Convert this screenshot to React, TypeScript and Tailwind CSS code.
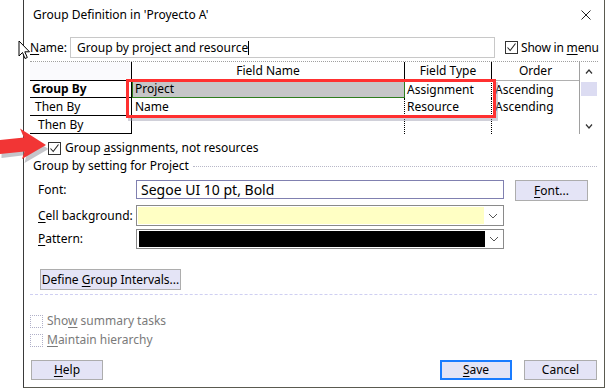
import React from "react";

const U = ({ children }: { children: React.ReactNode }) => <span className="underline underline-offset-2">{children}</span>;

function CheckBox({ checked, disabled }: { checked?: boolean; disabled?: boolean }) {
  return (
    <div
      className={
        "w-[13px] h-[13px] shrink-0 flex items-center justify-center bg-white " +
        (disabled ? "border border-dotted border-[#b0b0c8]" : "border border-[#333333]")
      }
    >
      {checked && (
        <svg width="11" height="11" viewBox="0 0 11 11">
          <polyline points="1.5,5.5 4.2,8.5 9.5,1.5" fill="none" stroke="#222" strokeWidth="1.1" />
        </svg>
      )}
    </div>
  );
}

function Btn({ children, w, primary }: { children: React.ReactNode; w: string; primary?: boolean }) {
  return (
    <div
      className={
        "h-full flex items-center justify-center bg-[#e4e4f6] text-black " +
        w +
        " " +
        (primary ? "border-2 border-[#1a7cff]" : "border border-[#adadad]")
      }
    >
      {children}
    </div>
  );
}

function Chevron() {
  return (
    <svg width="10" height="6" viewBox="0 0 10 6">
      <polyline points="1,1 5,5 9,1" fill="none" stroke="#555" strokeWidth="1" />
    </svg>
  );
}

export default function App() {
  return (
    <div
      className="w-[605px] h-[389px] bg-white relative overflow-hidden text-[12px] leading-[16px] text-black"
      style={{ fontFamily: '"Noto Sans", "Open Sans", sans-serif' }}
    >
      <div className="ml-[23px] w-[582px] h-[388px] border-l border-r border-b border-l-[#3a3a3a] border-r-[#5a5a50] border-b-[#5a5a50] flex flex-col">
        {/* title */}
        <div className="h-[30px] flex items-center justify-between pl-[9px] pr-[13px]">
          <span className="text-[12px]">Group Definition in 'Proyecto A'</span>
          <svg width="10" height="10" viewBox="0 0 10 10">
            <path d="M0.5 0.5 L9.5 9.5 M9.5 0.5 L0.5 9.5" stroke="#222" strokeWidth="1" />
          </svg>
        </div>

        <div className="px-[6px] flex flex-col">
          {/* name row */}
          <div className="mt-[7px] h-[21px] flex items-center whitespace-nowrap">
            <span className="w-[40px] shrink-0">
              <U>N</U>ame:
            </span>
            <div className="w-[425px] shrink-0 h-full border border-[#c8c8c8] flex items-center pl-[6px]">
              Group by project and resource
              <span className="w-px h-[14px] bg-black" />
            </div>
            <div className="ml-[10px] flex items-center gap-[3px] shrink-0">
              <CheckBox checked />
              <span className="tracking-[-0.2px]">
                Show in <U>m</U>enu
              </span>
            </div>
          </div>

          {/* table */}
          <div className="mt-[3px] h-[73px] flex relative border-t border-dotted border-[#a0a0a0]">
            <div className="flex flex-col">
              {/* header */}
              <div className="flex h-[19px]">
                <div className="w-[102px] border-r border-b border-black bg-[#fafafd]" />
                <div className="w-[273px] border-r border-black flex items-center justify-center">Field Name</div>
                <div className="w-[87px] border-r border-black flex items-center justify-center">Field Type</div>
                <div className="w-[87px] border-b border-[#b0b0b0] flex items-center justify-center">Order</div>
              </div>
              {/* rows */}
              <div className="flex h-[18px]">
                <div className="w-[102px] border-r border-b border-black flex items-center pl-[2px] font-bold">Group By</div>
                <div className="w-[273px] bg-[#c6c6c8] border-l border-b border-r border-[#2e7d1e] flex items-center pl-[2px]">Project</div>
                <div className="w-[87px] border-r border-dotted border-black flex items-center pl-[2px]">Assignment</div>
                <div className="w-[87px] flex items-center pl-[3px]">Ascending</div>
              </div>
              <div className="flex h-[18px]">
                <div className="w-[102px] border-r border-b border-black flex items-center pl-[5px]">Then By</div>
                <div className="w-[273px] border-r border-dotted border-black flex items-center pl-[3px]">Name</div>
                <div className="w-[87px] border-r border-dotted border-black flex items-center pl-[2px]">Resource</div>
                <div className="w-[87px] flex items-center pl-[3px]">Ascending</div>
              </div>
              <div className="flex h-[18px]">
                <div className="w-[102px] border-r border-b border-black flex items-center pl-[8px]">Then By</div>
                <div className="w-[273px] border-r border-dotted border-black" />
                <div className="w-[87px] border-r border-dotted border-black" />
                <div className="w-[87px]" />
              </div>
            </div>
            {/* scrollbar */}
            <div className="w-[21px] border-l border-[#a0a0a0] flex flex-col items-center">
              <div className="h-[19px] flex items-center">
                <svg width="8" height="5" viewBox="0 0 8 5">
                  <polyline points="1,4.5 4,1 7,4.5" fill="none" stroke="#333" strokeWidth="1.2" />
                </svg>
              </div>
              <div className="w-[16px] h-[14px] bg-[#dcdcf2] mt-[1px]" />
              <div className="flex-1" />
              <div className="h-[12px] flex items-center mb-[2px]">
                <svg width="8" height="5" viewBox="0 0 8 5">
                  <polyline points="1,0.5 4,4 7,0.5" fill="none" stroke="#333" strokeWidth="1.2" />
                </svg>
              </div>
            </div>
            {/* red highlight */}
            <div className="absolute left-[96px] top-[17px] w-[370px] h-[39px] border-[3px] border-[#ff3030] shadow-[2px_3px_0_rgba(150,150,170,0.45)]" />
          </div>

          {/* group assignments */}
          <div className="mt-[8px] h-[12px] flex items-center pl-[18px] gap-[4px]">
            <CheckBox checked />
            <span>
              Group <U>a</U>ssignments, not resources
            </span>
          </div>

          {/* section header */}
          <div className="mt-[5px] h-[14px] flex items-center">
            <span className="pl-[3px]">Group by setting for Project</span>
            <div className="flex-1 ml-[4px] mr-[1px] border-t border-dotted border-[#b8b8c8]" />
          </div>

          {/* font row */}
          <div className="mt-[7px] h-[21px] flex items-start">
            <span className="w-[106px] pl-[8px] h-[19px] flex items-center">Font:</span>
            <div className="w-[368px] h-[19px] border border-[#8080b0] flex items-center pl-[4px] text-[14px]">
              Segoe UI 10 pt, Bold
            </div>
            <div className="ml-[11px] h-[21px]">
              <Btn w="w-[73px]">
                <span>
                  <U>F</U>ont...
                </span>
              </Btn>
            </div>
          </div>

          {/* cell background */}
          <div className="mt-[4px] h-[21px] flex items-center">
            <span className="w-[106px] pl-[8px]">
              <U>C</U>ell background:
            </span>
            <div className="w-[368px] h-full border border-[#8a8a8a] flex items-center p-[1px]">
              <div className="w-[346px] h-full bg-[#ffffc4]" />
              <div className="flex-1 flex justify-center">
                <Chevron />
              </div>
            </div>
          </div>

          {/* pattern */}
          <div className="mt-[3px] h-[20px] flex items-center">
            <span className="w-[106px] pl-[8px]">
              <U>P</U>attern:
            </span>
            <div className="w-[368px] h-full border border-[#8a8a8a] flex items-center py-[1px] pl-[2px] pr-[1px]">
              <div className="w-[346px] h-full bg-black" />
              <div className="flex-1 flex justify-center">
                <Chevron />
              </div>
            </div>
          </div>

          {/* define group intervals */}
          <div className="mt-[20px] h-[21px] pl-[10px] flex">
            <Btn w="w-[141px]">
              <span>
                Define <U>G</U>roup Intervals...
              </span>
            </Btn>
          </div>

          {/* dashed separator */}
          <div className="mt-[4px] mr-[1px] border-t border-dashed border-[#cfcff2]" />

          {/* disabled checks */}
          <div className="mt-[20px] h-[12px] flex items-center gap-[4px] text-[#7a7a7a]">
            <CheckBox disabled />
            <span>
              Sho<U>w</U> summary tasks
            </span>
          </div>
          <div className="mt-[7px] h-[12px] flex items-center gap-[4px] text-[#7a7a7a]">
            <CheckBox disabled />
            <span>
              <U>M</U>aintain hierarchy
            </span>
          </div>

          {/* bottom buttons */}
          <div className="mt-[14px] h-[20px] flex items-stretch">
            <div className="ml-[1px]">
              <Btn w="w-[72px]">
                <span>
                  <U>H</U>elp
                </span>
              </Btn>
            </div>
            <div className="flex-1" />
            <Btn w="w-[72px]" primary>
              <span>
                <U>S</U>ave
              </span>
            </Btn>
            <div className="ml-[12px] mr-[1px]">
              <Btn w="w-[73px]">Cancel</Btn>
            </div>
          </div>
        </div>
      </div>

      {/* mouse cursor */}
      <svg className="absolute left-[18px] top-[40px]" width="14" height="22" viewBox="0 0 14 22">
        <path d="M1 1 L1 16 L4.5 12.5 L7 18.5 L9.3 17.5 L6.8 11.8 L11.5 11.8 Z" fill="white" stroke="black" strokeWidth="1" strokeLinejoin="round" />
      </svg>

      {/* red arrow */}
      <svg className="absolute left-0 top-[126px]" width="50" height="38" viewBox="0 0 50 38">
        <path d="M0 16 L24 13 L20 4 L47 21 L23 35 L25 27 L0 30 Z" fill="rgba(140,140,150,0.5)" transform="translate(1.5,2)" />
        <path d="M0 14 L24 11.5 L20 2.5 L46 19 L22 33 L24.5 25.5 L0 28 Z" fill="#f23535" />
      </svg>
    </div>
  );
}
